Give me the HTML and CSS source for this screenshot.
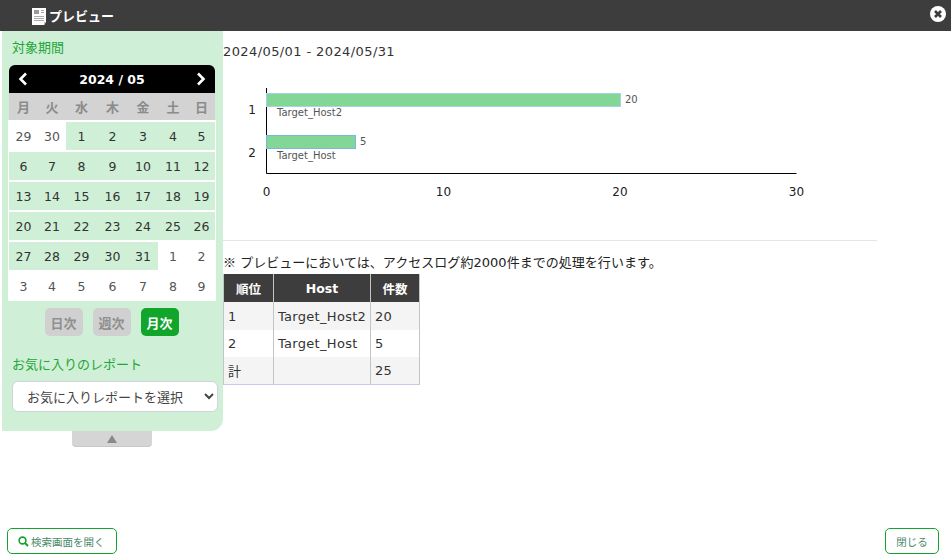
FILE: index.html
```html
<!DOCTYPE html>
<html lang="ja">
<head>
<meta charset="utf-8">
<title>プレビュー</title>
<link rel="stylesheet" href="styles.css">
</head>
<body>
<header class="titlebar">
  <svg class="doc-icon" width="15" height="17" viewBox="0 0 15 17"><path d="M0 0H14V14L12 17H0Z" fill="#fff"/><path d="M2 2H7V6H2Z" fill="#999"/><path d="M9 2H12V3H9ZM9 4H12V5H9ZM2 8H12V9H2ZM2 10H12V11H2ZM2 12H12V13H2Z" fill="#aaa"/><path d="M12 14H14L12 17Z" fill="#bbb"/></svg>
  <span class="title">プレビュー</span>
  <svg class="close-icon" width="16" height="16" viewBox="0 0 16 16"><circle cx="8" cy="8" r="8" fill="#fff"/><path d="M5 5L11 11M11 5L5 11" stroke="#3d3d3d" stroke-width="2.6"/></svg>
</header>
<div class="main">
  <aside class="side-wrap">
    <div class="side">
      <div class="side-label first">対象期間</div>
      <div class="cal">
        <div class="cal-head">
          <svg width="10" height="14" viewBox="0 0 10 14"><path d="M8 1.5L2.5 7L8 12.5" fill="none" stroke="#fff" stroke-width="2.6"/></svg>
          <span>2024 / 05</span>
          <svg width="10" height="14" viewBox="0 0 10 14"><path d="M2 1.5L7.5 7L2 12.5" fill="none" stroke="#fff" stroke-width="2.6"/></svg>
        </div>
        <div class="cal-week"><span>月</span><span>火</span><span>水</span><span>木</span><span>金</span><span>土</span><span>日</span></div>
        <div class="cal-days">
          <span>29</span><span>30</span><span class="on">1</span><span class="on">2</span><span class="on">3</span><span class="on">4</span><span class="on">5</span>
          <span class="on">6</span><span class="on">7</span><span class="on">8</span><span class="on">9</span><span class="on">10</span><span class="on">11</span><span class="on">12</span>
          <span class="on">13</span><span class="on">14</span><span class="on">15</span><span class="on">16</span><span class="on">17</span><span class="on">18</span><span class="on">19</span>
          <span class="on">20</span><span class="on">21</span><span class="on">22</span><span class="on">23</span><span class="on">24</span><span class="on">25</span><span class="on">26</span>
          <span class="on">27</span><span class="on">28</span><span class="on">29</span><span class="on">30</span><span class="on">31</span><span>1</span><span>2</span>
          <span>3</span><span>4</span><span>5</span><span>6</span><span>7</span><span>8</span><span>9</span>
        </div>
      </div>
      <div class="modes"><span class="mode">日次</span><span class="mode">週次</span><span class="mode active">月次</span></div>
      <div class="side-label">お気に入りのレポート</div>
      <select class="fav"><option>お気に入りレポートを選択</option></select>
    </div>
    <div class="toggle"><span class="tri"></span></div>
  </aside>
  <section class="content">
    <div class="period">2024/05/01 - 2024/05/31</div>
    <svg class="chart" width="654" height="160" viewBox="223 70 654 160">
      <path d="M266.5 88V173.5H796.5" fill="none" stroke="#000"/>
      <rect x="266.5" y="93.5" width="354" height="13" fill="#82d696" stroke="#a5d3ea"/>
      <rect x="266.5" y="135.5" width="89" height="13" fill="#82d696" stroke="#7ab8e0"/>
      <g class="c-small">
        <text x="625" y="103">20</text>
        <text x="360" y="145">5</text>
        <text x="277" y="116">Target_Host2</text>
        <text x="277" y="159">Target_Host</text>
      </g>
      <g class="c-axis">
        <text x="252" y="114" text-anchor="middle">1</text>
        <text x="252" y="157" text-anchor="middle">2</text>
        <text x="266.5" y="196" text-anchor="middle">0</text>
        <text x="443.5" y="196" text-anchor="middle">10</text>
        <text x="620" y="196" text-anchor="middle">20</text>
        <text x="796.5" y="196" text-anchor="middle">30</text>
      </g>
    </svg>
    <hr class="rule">
    <p class="note"><span class="mark">※</span> プレビューにおいては、アクセスログ約2000件までの処理を行います。</p>
    <table class="result">
      <thead><tr><th class="c1">順位</th><th class="c2">Host</th><th class="c3">件数</th></tr></thead>
      <tbody>
        <tr class="row-first"><td>1</td><td>Target_Host2</td><td>20</td></tr>
        <tr><td>2</td><td>Target_Host</td><td>5</td></tr>
        <tr><td>計</td><td></td><td>25</td></tr>
      </tbody>
    </table>
  </section>
</div>
<footer class="foot">
  <button class="btn"><svg width="11" height="11" viewBox="0 0 11 11"><circle cx="4.5" cy="4.5" r="3.4" fill="none" stroke="#13a32c" stroke-width="1.6"/><path d="M7 7L10 10" stroke="#13a32c" stroke-width="2"/></svg>検索画面を開く</button>
  <button class="btn close">閉じる</button>
</footer>
</body>
</html>
```
FILE: styles.css
```css
* { box-sizing: border-box; }
html, body { margin: 0; height: 100%; }
body {
  width: 951px; height: 558px; overflow: hidden; background: #fff; color: #333;
  font-family: "DejaVu Sans", "Noto Sans CJK JP", sans-serif; font-size: 13px;
  display: flex; flex-direction: column;
}
.titlebar {
  height: 31px; flex: none; background: #3d3d3d; display: flex; align-items: center;
  padding: 0 5px 0 32px;
}
.doc-icon { margin: 2px 2px 0 0; }
.title { color: #fff; font-weight: 700; font-size: 13px; }
.close-icon { margin: -3px 0 0 auto; }
.main { flex: 1; display: flex; min-height: 0; padding-left: 2px; }
.side-wrap { width: 221px; flex: none; display: flex; flex-direction: column; }
.side {
  height: 400px; background: #cff0d6; border-radius: 0 0 12px 0; padding: 8px 5px 0 7px;
}
.side-label { color: #1fa538; font-size: 13px; line-height: 18px; padding-left: 3px; margin-top: 20px; }
.side-label.first { margin-top: 0; }
.cal { margin-top: 8px; width: 206px; }
.cal-head {
  height: 28px; background: #000; border-radius: 6px 6px 0 0; color: #fff; font-weight: 700; font-size: 12.5px;
  display: flex; align-items: center; justify-content: space-between; padding: 0 9px;
}
.cal-week, .cal-days { display: grid; grid-template-columns: 29px 28px 31px 31px 30px 30px 27px; }
.cal-week { height: 27px; background: #d3d3d3; color: #8b8b8b; font-weight: 700; align-items: center; text-align: center; }
.cal-days {
  background: #fff; grid-auto-rows: 30px; padding: 2px 1px 0 1px; height: 181px;
  margin: 0 -1px; width: 208px; font-size: 12.5px;
}
.cal-days span { display: flex; align-items: center; justify-content: center; height: 28px; color: #555; }
.cal-days .on { background: #cff0d6; color: #333; }
.modes { display: flex; justify-content: center; gap: 10px; margin-top: 7px; padding-right: 4px; }
.mode {
  width: 38px; height: 28px; border-radius: 5px; background: #d0d0d0; color: #8f8f8f; font-weight: 700;
  display: flex; align-items: center; justify-content: center; font-size: 13px;
}
.mode.active { background: #11a52b; color: #fff; }
.fav {
  display: block; width: 206px; height: 31px; margin: 7px 0 0 3px; padding: 1px 0 0 10px; background: #fff;
  border: 1px solid #ced4da; border-radius: 6px; color: #444; font: inherit;
}
.toggle {
  width: 80px; height: 16px; margin-left: 70px; background: #d5d5d5; border-radius: 0 0 4px 4px;
  border-bottom: 1px solid #c8c8c8; display: flex; justify-content: center; align-items: center;
}
.tri { width: 0; height: 0; border: 5px solid transparent; border-top: 0; border-bottom: 8px solid #8a8a8a; }
.content { width: 654px; flex: none; }
.period { height: 39px; padding-top: 11px; line-height: 20px; letter-spacing: .4px; }
.chart { display: block; }
.c-small text { font-size: 10px; fill: #555; }
.c-axis text { font-size: 12px; fill: #222; }
.rule { border: 0; border-top: 1px solid #e5e5e5; margin: 10px 0 0; }
.note { margin: 11px 0 0; line-height: 20px; color: #222; font-size: 13px; letter-spacing: .03px; }
.mark { font-family: "Noto Sans CJK JP", sans-serif; }
.result { border-collapse: collapse; margin: 1px 0 0; border-bottom: 1px solid #c8c8f0; width: 196px; table-layout: fixed; }
.result th, .result td { border: 1px solid #c4c4c4; border-width: 0 1px; font-size: 13px; padding: 0 4px; height: 27px; text-align: left; white-space: nowrap; }
.result td { color: #333; letter-spacing: .3px; }
.result .row-first td { height: 28px; }
.result tbody tr:nth-child(odd) td { background: #f4f4f4; }
.result th { background: #3d3d3d; color: #fff; height: 28px; text-align: center; font-size: 12.5px; }
.c1 { width: 50px; } .c2 { width: 97px; } .c3 { width: 49px; }
.foot { flex: none; display: flex; justify-content: space-between; padding: 0 12px 4px 7px; }
.btn {
  height: 26px; padding: 0 10px; border: 1px solid #13a32c; border-radius: 5px; background: #fff;
  color: #4a8a6a; font: inherit; font-size: 10.5px; display: flex; align-items: center; gap: 2px; width: 110px;
}
.btn.close { width: 54px; justify-content: center; padding: 0; }
```
